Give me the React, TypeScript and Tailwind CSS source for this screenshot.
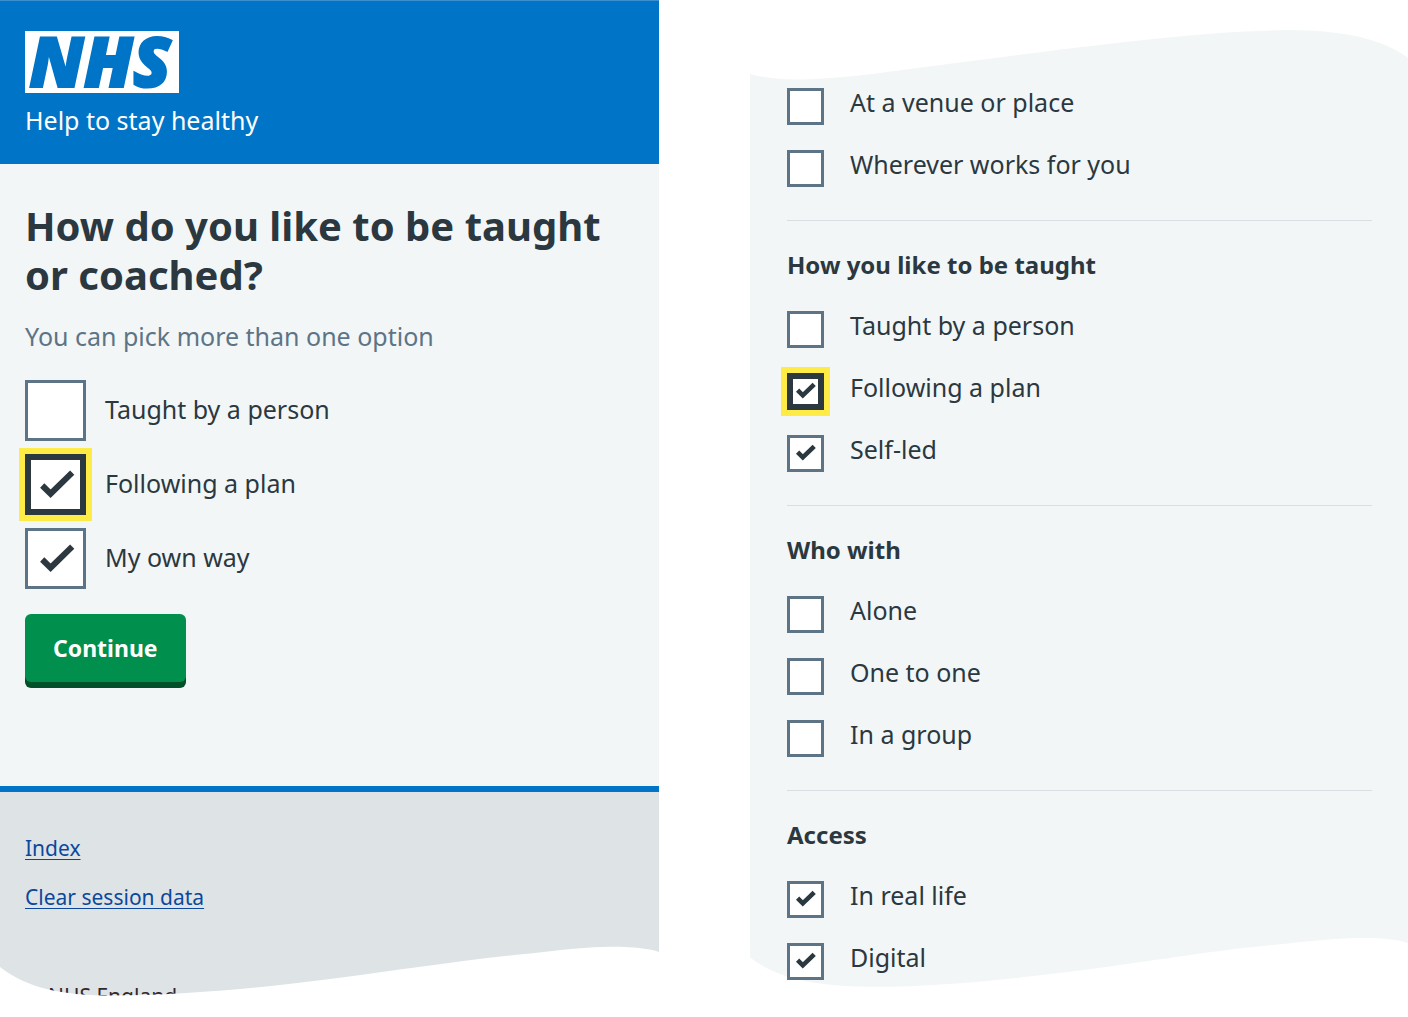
import React, { useId } from "react";

type Option = { label: string; checked?: boolean; highlighted?: boolean };
type Group = { title?: string; options: Option[] };

const teachingOptions: Option[] = [
  { label: "Taught by a person" },
  { label: "Following a plan", checked: true, highlighted: true },
  { label: "My own way", checked: true },
];

const filterGroups: Group[] = [
  { options: [{ label: "At a venue or place" }, { label: "Wherever works for you" }] },
  {
    title: "How you like to be taught",
    options: [
      { label: "Taught by a person" },
      { label: "Following a plan", checked: true, highlighted: true },
      { label: "Self-led", checked: true },
    ],
  },
  {
    title: "Who with",
    options: [{ label: "Alone" }, { label: "One to one" }, { label: "In a group" }],
  },
  {
    title: "Access",
    options: [
      { label: "In real life", checked: true },
      { label: "Digital", checked: true },
    ],
  },
];

function Checkbox({ option, small = false }: { option: Option; small?: boolean }) {
  const id = useId();
  const size = small ? "size-[37px]" : "size-[61px]";
  const border = option.highlighted
    ? "border-6 border-[#2b3840] shadow-[0_0_0_6px_#ffeb45]"
    : "border-3 border-[#5c7486]";
  return (
    <div className={small ? "flex items-center gap-[26px]" : "flex items-center gap-[19px]"}>
      <span className={`grid shrink-0 ${size}`}>
        <input
          id={id}
          type="checkbox"
          defaultChecked={option.checked}
          className={`peer col-start-1 row-start-1 appearance-none bg-white outline-none ${size} ${border}`}
        />
        <svg
          viewBox={small ? "0 0 37 37" : "0 0 61 61"}
          className="pointer-events-none invisible col-start-1 row-start-1 size-full peer-checked:visible"
          fill="none"
          stroke="#2b3840"
          strokeWidth={small ? 4.6 : 6}
          aria-hidden="true"
        >
          <path d={small ? "M10.6 17.2 15.8 22.4 27.2 11.4" : "M17.2 31.5 25.6 39.7 47.2 18.6"} />
        </svg>
      </span>
      <label htmlFor={id} className={small ? "pb-[9px] text-[25px] leading-7" : "pb-[3px] text-[25px] leading-8"}>
        {option.label}
      </label>
    </div>
  );
}

function Wave({ d, className, viewBox }: { d: string; className: string; viewBox: string }) {
  return (
    <svg
      viewBox={viewBox}
      preserveAspectRatio="none"
      className={`pointer-events-none absolute left-0 w-full ${className}`}
      fill="#fff"
      aria-hidden="true"
    >
      <path d={d} />
    </svg>
  );
}

function QuestionPage() {
  return (
    <section className="relative overflow-hidden bg-[#f2f6f7]">
      <header className="border-t border-[#3b8fcf] bg-[#0074c7] px-[25px] pt-[30px] pb-7 text-white">
        <div className="flex h-[62px] w-[154px] items-center justify-center bg-white pr-1 pb-1 text-[69px] leading-none font-extrabold text-[#0074c7] italic font-['Open_Sans',sans-serif] [-webkit-text-stroke:2px_#0074c7]">
          NHS
        </div>
        <p className="mt-[11px] text-[25px] leading-8">Help to stay healthy</p>
      </header>
      <main className="px-[25px] pt-[37px] pb-[98px]">
        <h1 className="text-[40px] leading-[49px] font-bold">How do you like to be taught or coached?</h1>
        <form onSubmit={(event) => event.preventDefault()}>
          <p className="mt-[21px] text-[25px] leading-8 text-[#5c7486]">You can pick more than one option</p>
          <div className="mt-7 flex flex-col gap-[13px]">
            {teachingOptions.map((option) => (
              <Checkbox key={option.label} option={option} />
            ))}
          </div>
          <button
            type="submit"
            className="mt-[25px] mb-1.5 block h-[68px] rounded-md bg-[#008f4c] px-7 text-[23px] font-bold text-white shadow-[0_6px_0_#005029]"
          >
            Continue
          </button>
        </form>
      </main>
      <footer className="border-t-6 border-[#0074c7] bg-[#dee4e6] px-[25px] pt-10">
        <ul className="flex flex-col gap-[17px] text-[21px] leading-8 text-[#0b489c]">
          <li>
            <a href="#index" className="underline decoration-1 underline-offset-3">Index</a>
          </li>
          <li>
            <a href="#clear" className="underline decoration-1 underline-offset-3">Clear session data</a>
          </li>
        </ul>
        <p className="mt-[67px] h-4 text-[21px] leading-8 text-[#33282d]">© NHS England</p>
      </footer>
      <Wave
        viewBox="0 0 659 60"
        className="bottom-0 h-[60px]"
        d="M0 31C28 53 64 59.500 112 59.500C180 59.500 262 52 330 43C400 34 470 23 530 17.500C560 14 590 10.800 612 10.800C635 10.800 650 13 659 16V60H0Z"
      />
    </section>
  );
}

function FilterPage() {
  return (
    <section className="relative overflow-hidden bg-[#f2f6f7] pt-[88px] pr-9 pb-[7px] pl-[37px]">
      <Wave
        viewBox="0 0 658 87"
        className="top-0 h-[87px]"
        d="M0 0H658V58C632 38 590 30.300 540 30.300C480 30.300 420 37 350 45C270 54 170 68 113 75C80 78.500 60 79.500 45 79.500C25 79.500 10 76.500 0 74Z"
      />
      <Wave
        viewBox="0 0 658 60"
        className="bottom-0 h-[60px]"
        d="M0 30.500C30 54 75 59.800 125 59.800C190 59.800 260 52 330 43.500C400 34.500 460 24 513 19C560 14 590 11 612 11C635 11 650 13 658 16V60H0Z"
      />
      <form className="relative" onSubmit={(event) => event.preventDefault()}>
        {filterGroups.map((group, index) => (
          <fieldset
            key={group.title ?? "place"}
            className={index > 0 ? "mt-[33px] border-t border-[#d8dee1] pt-7" : ""}
          >
            {group.title && <legend className="float-left mb-[30px] w-full text-2xl font-bold">{group.title}</legend>}
            <div className="clear-both flex flex-col gap-[25px]">
              {group.options.map((option) => (
                <Checkbox key={option.label} option={option} small />
              ))}
            </div>
          </fieldset>
        ))}
      </form>
    </section>
  );
}

export default function App() {
  return (
    <div className="grid min-h-screen grid-cols-[659fr_658fr] items-start gap-[91px] bg-white text-[#2b3840] font-['Noto_Sans',sans-serif]">
      <QuestionPage />
      <FilterPage />
    </div>
  );
}
